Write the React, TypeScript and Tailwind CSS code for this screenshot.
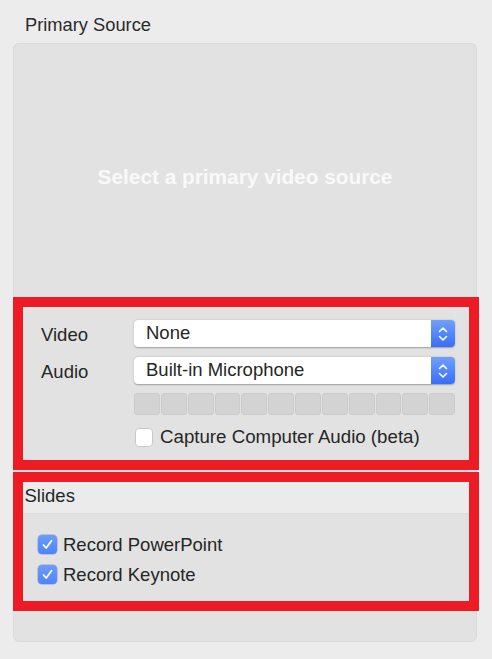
import React from "react";

const font = { fontFamily: '"Liberation Sans", Arial, sans-serif' };

function Stepper() {
  return (
    <div className="w-[24px] h-full rounded-r-[4px] bg-gradient-to-b from-[#6fa0fb] to-[#3a6ef6] flex items-center justify-center">
      <svg width="12" height="18" viewBox="0 0 12 18" fill="none">
        <path d="M2.5 6.5 L6 3 L9.5 6.5" stroke="white" strokeWidth="1.6" strokeLinecap="round" strokeLinejoin="round" />
        <path d="M2.5 11.5 L6 15 L9.5 11.5" stroke="white" strokeWidth="1.6" strokeLinecap="round" strokeLinejoin="round" />
      </svg>
    </div>
  );
}

function Select({ value }: { value: string }) {
  return (
    <div className="h-[27px] w-[321px] flex bg-white rounded-[4px] shadow-[0_0.5px_1.5px_rgba(0,0,0,0.3)]">
      <div className="flex-1 flex items-center pl-[12px] text-[18.5px] text-[#262626] leading-none">{value}</div>
      <Stepper />
    </div>
  );
}

function CheckedBox() {
  return (
    <div className="w-[19px] h-[19px] rounded-[4px] bg-gradient-to-b from-[#6c9df9] to-[#4f84f6] flex items-center justify-center shadow-[0_0_0_0.5px_rgba(60,100,220,0.5)]">
      <svg width="13" height="13" viewBox="0 0 13 13" fill="none">
        <path d="M2.5 7 L5.2 10 L10.5 2.8" stroke="white" strokeWidth="1.8" strokeLinecap="round" strokeLinejoin="round" />
      </svg>
    </div>
  );
}

export default function App() {
  return (
    <div className="w-[492px] h-[659px] bg-[#ececec] text-[#262626]" style={font}>
      <div className="h-[43px] pt-[14px] pl-[25px] text-[18.3px] leading-[22px] text-[#2a2a2a]">Primary Source</div>
      <div className="ml-[13px] w-[464px] h-[599px] bg-[#e2e2e2] rounded-[6px] border border-[#dadada] flex flex-col">
        <div className="h-[253px] flex items-center justify-center pt-[13px]">
          <span className="text-[20.8px] font-bold text-[#f9f9f9]">Select a primary video source</span>
        </div>
        <div className="-ml-[1px] w-[466px] h-[173px] border-[10.5px] border-[#ed1c24] flex flex-col pt-[13px] pl-[18px]">
          <div className="grid grid-cols-[93px_321px] gap-y-[10px] items-center">
            <div className="text-[18.5px] leading-[22px] pt-[3px]">Video</div>
            <Select value="None" />
            <div className="text-[18.5px] leading-[22px] pt-[3px]">Audio</div>
            <Select value="Built-in Microphone" />
          </div>
          <div className="ml-[93px] mt-[9px] w-[321px] h-[22px] grid grid-cols-12 gap-[1px]">
            {Array.from({ length: 12 }).map((_, i) => (
              <div key={i} className="bg-[#d3d3d3] border border-[#cbcbcb] rounded-[3px]" />
            ))}
          </div>
          <div className="ml-[94px] mt-[11px] flex items-center gap-[7px]">
            <div className="w-[18px] h-[19px] bg-white rounded-[4px] border border-[#c9c9c9]" />
            <span className="text-[18.7px] leading-[22px]">Capture Computer Audio (beta)</span>
          </div>
        </div>
        <div className="-ml-[1px] mt-[2px] w-[466px] h-[139px] border-[10.5px] border-[#ed1c24] flex flex-col">
          <div className="h-[32px] bg-[#ebebeb] border-b border-[#dcdcdc] pt-[3px] pl-[1.5px] text-[18.5px] leading-[22px]">Slides</div>
          <div className="flex-1 bg-[#e2e2e2] pt-[21px] pl-[15px] flex flex-col gap-[11px]">
            <div className="flex items-center gap-[6px]">
              <CheckedBox />
              <span className="text-[18.5px] leading-[19px]">Record PowerPoint</span>
            </div>
            <div className="flex items-center gap-[6px]">
              <CheckedBox />
              <span className="text-[18.5px] leading-[19px]">Record Keynote</span>
            </div>
          </div>
        </div>
      </div>
    </div>
  );
}
